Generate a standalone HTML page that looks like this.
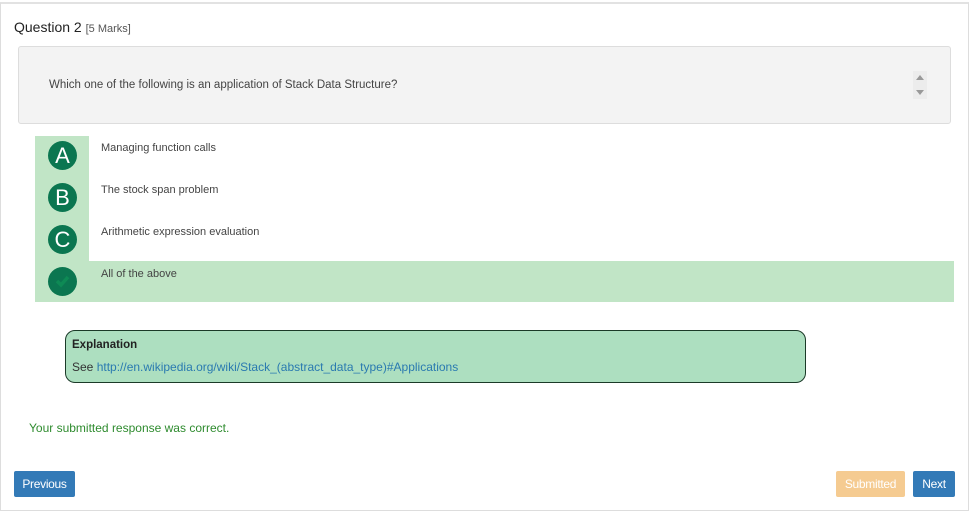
<!DOCTYPE html>
<html><head><meta charset="utf-8"><style>
*{margin:0;padding:0;box-sizing:border-box}
body{width:971px;height:512px;background:#fff;font-family:"Liberation Sans",sans-serif;position:relative;overflow:hidden;color:#333}
.card{position:absolute;left:0;top:2px;width:969px;height:509px;border:1px solid #ddd;border-top:2px solid #e2e2e2;background:#fff}
.abs{position:absolute}
.circle{position:absolute;left:48px;width:29px;height:29px;border-radius:50%;background:#0b7650;color:#fff;font-size:22px;line-height:29px;text-align:center}
.opt{position:absolute;left:101px;font-size:11px;color:#444}
.btn{position:absolute;top:471px;height:26px;border-radius:2px;color:#fff;font-size:12px;line-height:26px;text-align:center;letter-spacing:-0.3px}
</style></head><body>
<div class="card"></div>
<div class="abs" style="left:14px;top:19px;font-size:14px;color:#222">Question 2 <span style="font-size:11px;color:#555">[5 Marks]</span></div>
<div class="abs" style="left:18px;top:46px;width:933px;height:78px;background:#f3f3f3;border:1px solid #ddd;border-radius:3px"></div>
<div class="abs" style="left:49px;top:79px;font-size:11.5px;color:#444">Which one of the following is an application of Stack Data Structure?</div>
<div class="abs" style="left:913px;top:71px;width:14px;height:28px;background:#ececec"></div>
<div class="abs" style="left:916px;top:75px;width:0;height:0;border-left:4px solid transparent;border-right:4px solid transparent;border-bottom:5px solid #999"></div>
<div class="abs" style="left:916px;top:90px;width:0;height:0;border-left:4px solid transparent;border-right:4px solid transparent;border-top:5px solid #999"></div>
<div class="abs" style="left:35px;top:136px;width:54px;height:166px;background:#c1e5c6"></div>
<div class="abs" style="left:35px;top:261px;width:919px;height:41px;background:#c1e5c6"></div>
<div class="circle" style="top:141px">A</div>
<div class="circle" style="top:183px">B</div>
<div class="circle" style="top:225px">C</div>
<div class="circle" style="top:267px"><svg width="29" height="29" viewBox="0 0 29 29"><path d="M9 14 L13 18 L20 10" stroke="#0e8a55" stroke-width="3.5" fill="none"/></svg></div>
<div class="opt" style="top:142px">Managing function calls</div>
<div class="opt" style="top:184px">The stock span problem</div>
<div class="opt" style="top:226px">Arithmetic expression evaluation</div>
<div class="opt" style="top:268px">All of the above</div>
<div class="abs" style="left:65px;top:330px;width:741px;height:53px;background:#addfc0;border:1px solid #1b3a28;border-radius:10px"></div>
<div class="abs" style="left:72px;top:339px;font-size:11.5px;color:#222;font-weight:600">Explanation</div>
<div class="abs" style="left:72px;top:360px;font-size:12px;color:#333">See <span style="color:#2a7ab0">http://en.wikipedia.org/wiki/Stack_(abstract_data_type)#Applications</span></div>
<div class="abs" style="left:29px;top:421px;font-size:12px;color:#2e8b2e">Your submitted response was correct.</div>
<div class="btn" style="left:14px;width:61px;background:#337ab7">Previous</div>
<div class="btn" style="left:836px;width:69px;background:#f5cb91">Submitted</div>
<div class="btn" style="left:913px;width:42px;background:#337ab7">Next</div>
</body></html>
